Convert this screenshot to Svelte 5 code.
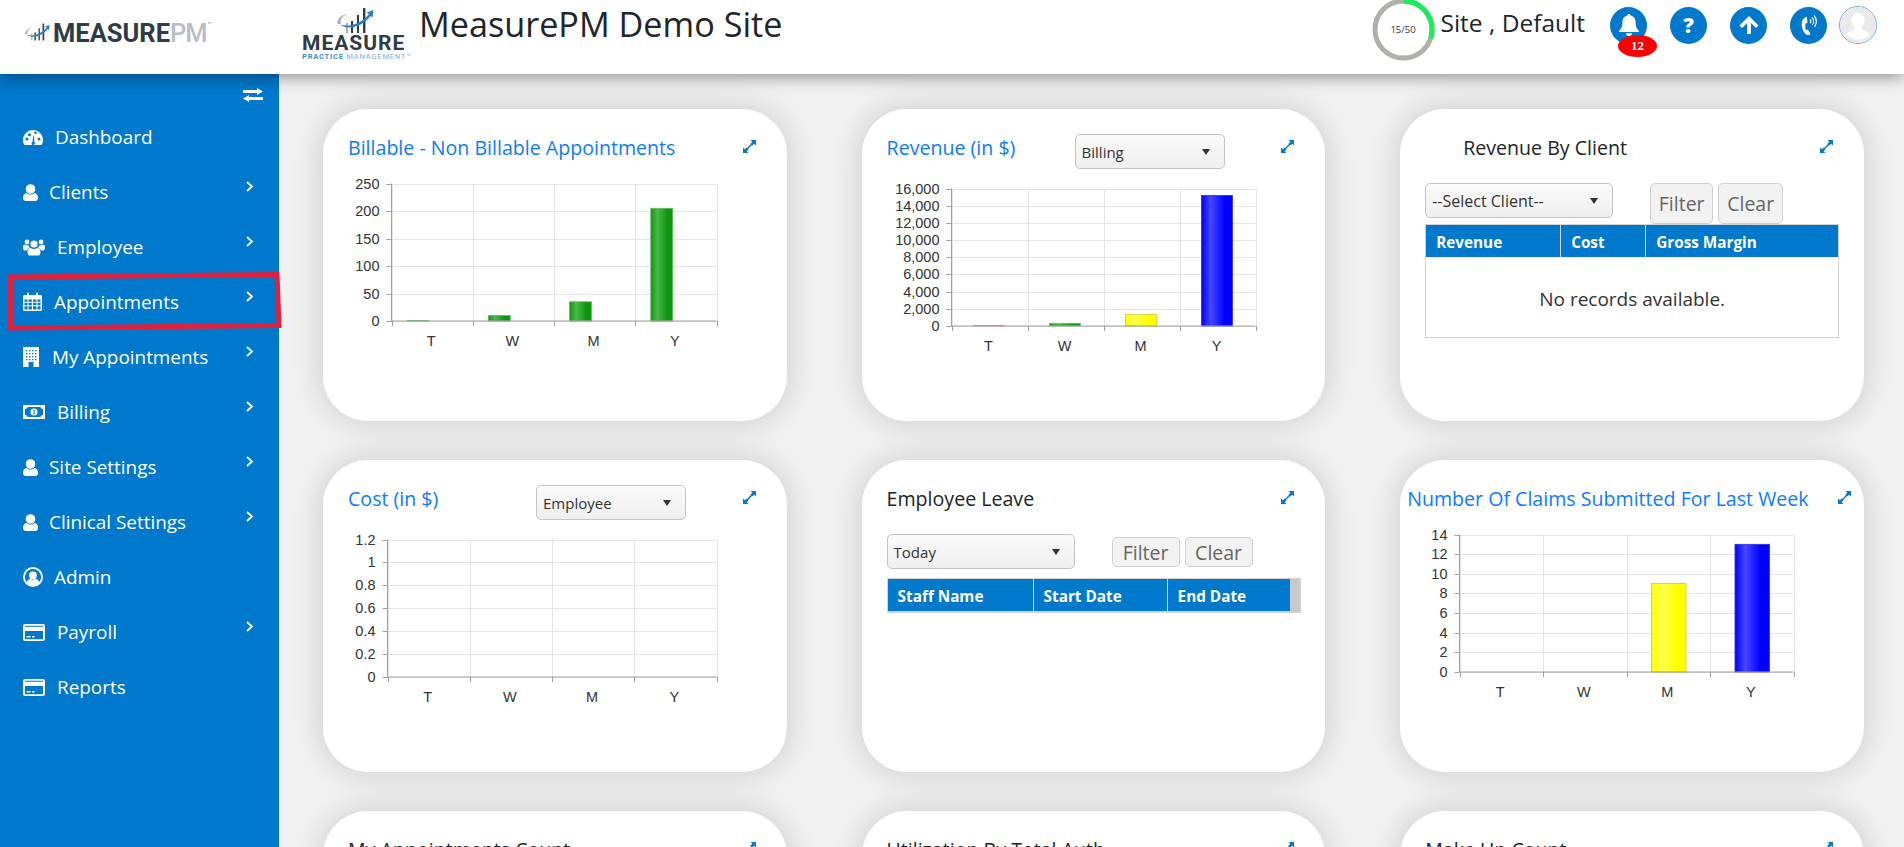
<script>
  const menu = [
    { label: "Dashboard", icon: "gauge", w: 21, sub: false },
    { label: "Clients", icon: "user", w: 15, sub: true },
    { label: "Employee", icon: "users", w: 23, sub: true },
    { label: "Appointments", icon: "calendar", w: 20, sub: true },
    { label: "My Appointments", icon: "building", w: 18, sub: true },
    { label: "Billing", icon: "money", w: 23, sub: true },
    { label: "Site Settings", icon: "user", w: 15, sub: true },
    { label: "Clinical Settings", icon: "user", w: 15, sub: true },
    { label: "Admin", icon: "usercircle", w: 20, sub: false },
    { label: "Payroll", icon: "card", w: 23, sub: true },
    { label: "Reports", icon: "card", w: 23, sub: false },
  ];

  const cats = ["T", "W", "M", "Y"];

  const billable = {
    id: "billable", x0: 68.5, x1: 393.5, y0: 74.5, y1: 212, max: 250,
    ticks: ["250", "200", "150", "100", "50", "0"],
    offset: 15.5, barW: 22,
    bars: [
      { i: 0, v: 1, c: "green" },
      { i: 1, v: 10, c: "green" },
      { i: 2, v: 35, c: "green" },
      { i: 3, v: 205, c: "green" },
    ],
  };
  const revenue = {
    id: "revenue", x0: 89.5, x1: 393.5, y0: 79.5, y1: 217, max: 16000,
    ticks: ["16,000", "14,000", "12,000", "10,000", "8,000", "6,000", "4,000", "2,000", "0"],
    offset: 22, barW: 31,
    bars: [
      { i: 0, v: 80, c: "red" },
      { i: 1, v: 310, c: "green" },
      { i: 2, v: 1320, c: "yellow" },
      { i: 3, v: 15200, c: "blue" },
    ],
  };
  const cost = {
    id: "cost", x0: 64.5, x1: 393.5, y0: 79.5, y1: 217, max: 1.2,
    ticks: ["1.2", "1", "0.8", "0.6", "0.4", "0.2", "0"],
    offset: 20, barW: 30,
    bars: [],
  };
  const claims = {
    id: "claims", x0: 59.5, x1: 393.5, y0: 74.5, y1: 212, max: 14,
    ticks: ["14", "12", "10", "8", "6", "4", "2", "0"],
    offset: 25, barW: 34.5,
    bars: [
      { i: 2, v: 9, c: "yellow" },
      { i: 3, v: 13, c: "blue" },
    ],
  };

  const swatch = {
    green: ["#0c960c", "#4db84d", "#6db86d"],
    red: ["#e08080", "#f0a0a0", "#e89090"],
    yellow: ["#ffff00", "#ffff4d", "#cfc92a"],
    blue: ["#0000ff", "#4646ff", "#3030d8"],
  };

  const tickY = (c, n) => c.y0 + (n * (c.y1 - c.y0)) / (c.ticks.length - 1);
  const gridX = (c, n) => c.x0 + (n * (c.x1 - c.x0)) / 4;
</script>

{#snippet expand()}
  <svg class="expand" width="13" height="13" viewBox="0 0 13 13" fill="#0a78c8">
    <path d="M7.500 0H13v5.500L11.200 3.700 9.300 5.600 7.400 3.700 9.300 1.800z" />
    <path d="M5.500 13H0V7.500l1.800 1.800 1.900-1.900 1.900 1.900-1.900 1.900z" />
    <path d="M3.500 8.500 8.500 3.500 9.500 4.500 4.500 9.500z" />
  </svg>
{/snippet}

{#snippet caret()}
  <svg width="8" height="6" viewBox="0 0 8 6"><path d="M0 0h8L4 6z" fill="#333" /></svg>
{/snippet}

{#snippet dropdown(label, cls)}
  <div class="dropdown {cls}">
    <span>{label}</span>
    {@render caret()}
  </div>
{/snippet}

{#snippet chart(c)}
  <svg class="chart" width="464" height="254" viewBox="0 58 464 254">
    <defs>
      {#each Object.entries(swatch) as [name, tone]}
        <linearGradient id="{c.id}-{name}" x1="0" x2="1" y1="0" y2="0">
          <stop offset="0" stop-color={tone[0]} />
          <stop offset="0.3" stop-color={tone[1]} />
          <stop offset="0.75" stop-color={tone[0]} />
          <stop offset="1" stop-color={tone[0]} />
        </linearGradient>
      {/each}
    </defs>
    {#each c.ticks as t, n}
      {@const y = Math.round(tickY(c, n)) + 0.5}
      <line x1={c.x0} x2={c.x1} y1={y} y2={y} class="grid" />
      <line x1={c.x0 - 5} x2={c.x0} y1={y} y2={y} class="axis" />
      <text x={c.x0 - 12} y={y + 4} text-anchor="end">{t}</text>
    {/each}
    {#each [0, 1, 2, 3, 4] as n}
      {@const x = Math.round(gridX(c, n)) + 0.5}
      <line x1={x} x2={x} y1={c.y0} y2={c.y1} class="grid" />
      <line x1={x} x2={x} y1={c.y1} y2={c.y1 + 5} class="axis" />
    {/each}
    {#each cats as cat, n}
      <text x={gridX(c, n + 0.5) - 1} y={c.y1 + 25} text-anchor="middle">{cat}</text>
    {/each}
    {#each c.bars as b}
      {@const h = (b.v / c.max) * (c.y1 - c.y0)}
      <rect
        x={gridX(c, b.i) + c.offset}
        y={c.y1 - h}
        width={c.barW}
        height={h}
        fill="url(#{c.id}-{b.c})"
        stroke={swatch[b.c][2]}
        stroke-width="0.8"
      />
    {/each}
    <line x1={c.x0} x2={c.x0} y1={c.y0} y2={c.y1} class="axis" />
    <line x1={c.x0} x2={c.x1} y1={c.y1} y2={c.y1} class="axis" />
  </svg>
{/snippet}

{#snippet markIcon(width, height)}
  <svg {width} {height} viewBox="0 0 37 25">
    <g fill="#2e3b48">
      <rect x="20" y="7" width="2" height="18" />
      <rect x="26" y="0" width="2.4" height="25" />
      <rect x="14" y="13" width="2" height="12" />
    </g>
    <g fill="#aeb4ba">
      <rect x="9" y="15" width="2" height="10" />
      <path d="M0 15C1 9 7 6 11 6 6 7.5 3 11 4 15.5 2 16.5 1 16 0 15z" />
    </g>
    <path d="M3 16.5C12 20 25 15 32 6l-2.500-1.500 7-2.500-1 7.500-2-1.600C26 18 11 23 3 16.500z" fill="#2a7fc4" />
  </svg>
{/snippet}

{#snippet menuIcon(name, w)}
  <svg width={w} height="20" viewBox="0 0 {w} 20" fill="#fff" class="menu-icon">
    {#if name === "gauge"}
      <path fill-rule="evenodd" d="M10 3C4.500 3 0 7.500 0 13c0 1.800.4 3.400 1.300 4.800.2.200.4.200.7.200h16c.3 0 .5 0 .7-.2.9-1.400 1.300-3 1.300-4.800 0-5.500-4.500-10-10-10zM4 13.500a1.500 1.500 0 1 1 0-3 1.500 1.500 0 0 1 0 3zm2.500-4.200a1.500 1.500 0 1 1 0-3 1.500 1.500 0 0 1 0 3zm5 7.200a1.500 1.500 0 0 1-3 0c0-.7.400-1.200 1-1.400l.9-6.600h.6l.4 6.700c.5.200 1 .7 1 1.300zm1-9.500a1.300 1.300 0 1 1 0-2.600 1.300 1.300 0 0 1 0 2.600zm3.500 6.500a1.500 1.500 0 1 1 0-3 1.500 1.500 0 0 1 0 3z" />
    {:else if name === "user"}
      <circle cx="7.500" cy="7" r="4.800" />
      <path d="M0 16c0-3 1.500-4.800 3.500-5 1 1 2.400 1.500 4 1.500s3-.5 4-1.500c2 .2 3.500 2 3.500 5 0 2-1.200 3-2.800 3H2.800C1.200 19 0 18 0 16z" />
    {:else if name === "users"}
      <circle cx="11" cy="7" r="3.600" />
      <circle cx="4" cy="5" r="2.400" />
      <circle cx="18" cy="5" r="2.400" />
      <path d="M4.500 15.500c0-3 1.300-4.700 3-4.700 1 .8 2.100 1.200 3.500 1.200s2.500-.4 3.500-1.200c1.700 0 3 1.700 3 4.700 0 2-1.200 3-2.500 3H7c-1.300 0-2.500-1-2.500-3z" />
      <path d="M0 10c0-1.500.7-2.500 1.800-2.500.6.500 1.400.8 2.200.8.500 0 .9 0 1.200-.2.400 1 1 1.800 1.800 2.400-1.500.6-2.600 1.700-3 3H1.500C.6 13.500 0 12 0 10zM22 10c0-1.500-.7-2.500-1.800-2.500-.6.500-1.400.8-2.200.8-.5 0-.9 0-1.200-.2-.4 1-1 1.800-1.800 2.400 1.500.6 2.600 1.700 3 3h2.500c.9 0 1.500-1.500 1.500-3.500z" />
    {:else if name === "calendar"}
      <path fill-rule="evenodd" d="M1.500 3H4V1.500a1 1 0 0 1 2 0V3h7V1.500a1 1 0 0 1 2 0V3h2.500c.8 0 1.500.7 1.500 1.500v13c0 .8-.7 1.500-1.500 1.500h-16C.7 19 0 18.300 0 17.500v-13C0 3.700.7 3 1.500 3zM1.500 7.500v2.300h3V7.500zm4 0v2.300h3.400V7.500zm4.600 0v2.300h3.400V7.500zm4.400 0v2.300h3V7.500zM1.500 10.800v2.400h3v-2.400zm4 0v2.400h3.400v-2.400zm4.600 0v2.400h3.400v-2.400zm4.400 0v2.400h3v-2.400zM1.500 14.200v3.300h3v-3.300zm4 0v3.300h3.400v-3.300zm4.600 0v3.300h3.400v-3.300zm4.400 0v3.300h3v-3.300z" />
    {:else if name === "building"}
      <path fill-rule="evenodd" d="M0 0h16v20H0zM3 3v1.200h1.500V3zm3 0v1.200h1.500V3zm3 0v1.200h1.500V3zm3 0v1.200h1.500V3zM3 6v1.200h1.500V6zm3 0v1.200h1.500V6zm3 0v1.200h1.500V6zm3 0v1.200h1.500V6zM3 9v1.200h1.500V9zm3 0v1.200h1.500V9zm3 0v1.200h1.500V9zm3 0v1.200h1.500V9zM3 12v1.200h1.500V12zm3 0v1.200h1.500V12zm3 0v1.200h1.500V12zm3 0v1.200h1.500V12zM5.500 15v5h5v-5z" />
    {:else if name === "money"}
      <path fill-rule="evenodd" d="M0 3h22v14H0zM2 7v6c1.500 0 2.500 1 2.500 2h13c0-1 1-2 2.500-2V7c-1.500 0-2.500-1-2.500-2h-13C4.500 6 3.500 7 2 7zm9-.500a3.500 3.500 0 1 1 0 7 3.500 3.500 0 0 1 0-7zM10 8v.8h.7v2.700H10v.8h2.200v-.8h-.6V8z" />
    {:else if name === "usercircle"}
      <path fill-rule="evenodd" d="M10 0a10 10 0 1 1 0 20 10 10 0 0 1 0-20zm0 2a8 8 0 0 0-6.300 12.900C4.500 13 6 12 7.300 12c1.700 1 3.700 1 5.400 0 1.300 0 2.800 1 3.600 2.900A8 8 0 0 0 10 2zm0 2.500a3.900 3.900 0 1 1 0 7.800 3.900 3.900 0 0 1 0-7.800z" />
    {:else if name === "card"}
      <path fill-rule="evenodd" d="M2 2h18c1.100 0 2 .9 2 2v13c0 1.100-.9 2-2 2H2c-1.100 0-2-.9-2-2V4c0-1.100.9-2 2-2zM2 9v8c0 .2.100.3.300.3h17.400c.2 0 .3-.1.300-.3V9zM2 3.800v1h18v-1zM3.500 14h4v1.500h-4zm5.500 0h2.500v1.500H9z" />
    {/if}
  </svg>
{/snippet}

<div class="page">
  <header class="topbar">
    <div class="brand">
      {@render markIcon(25, 22)}
      <span class="brand-name">MEASURE<em>PM</em><sup>™</sup></span>
    </div>
    <div class="client-logo">
      <div class="client-mark">{@render markIcon(37, 25)}</div>
      <div class="client-name">MEASURE</div>
      <div class="client-sub"><b>PRACTICE</b> MANAGEMENT™</div>
    </div>
    <h1 class="site-title">MeasurePM Demo Site</h1>

    <div class="top-right">
      <div class="ring">
        <svg width="63" height="63" viewBox="0 0 63 63" fill="none">
          <circle cx="31.500" cy="31.500" r="28.500" stroke="#aeb0a9" stroke-width="5" />
          <path d="M31.500 3A28.500 28.500 0 0 1 58.600 40.300" stroke="#17f055" stroke-width="5" />
        </svg>
        <span>15/50</span>
      </div>
      <div class="site-user">Site , Default</div>
      <div class="round-btn bell">
        <svg width="20" height="22" viewBox="0 0 20 22" fill="#fff">
          <path d="M10 0c1 0 1.700.7 1.700 1.600 3.200.8 4.900 3.300 4.900 6.400 0 4.500 1 6.500 3.400 9v1H0v-1c2.400-2.500 3.400-4.500 3.400-9 0-3.100 1.700-5.600 4.900-6.400C8.300.7 9 0 10 0z" />
          <path d="M7 19.200h6a3 3 0 0 1-6 0z" />
        </svg>
        <span class="badge">12</span>
      </div>
      <div class="round-btn help">?</div>
      <div class="round-btn">
        <svg width="20" height="20" viewBox="0 0 20 20" fill="#fff">
          <path d="M10 1 19.500 10.500 17 13l-5-5v11H8V8l-5 5-2.500-2.500z" />
        </svg>
      </div>
      <div class="round-btn">
        <svg width="20" height="24" viewBox="0 0 20 24" fill="none">
          <path d="M6 4.500C2.500 6.500 2 11.500 3.500 16S7.500 22.500 10 22l1.500-1-2.500-4.500-1.800.7C6.300 15.500 5.800 12 6.700 10.500l1.800-.8L7.800 3.800z" fill="#fff" />
          <path d="M11 6.500c1 1 1 2.500.2 3.600M13 4.500c2 2 2 5.300.4 7.500M15 2.500c3 3.100 3 8.100.6 11.400" stroke="#fff" stroke-width="1.200" />
        </svg>
      </div>
      <div class="avatar">
        <svg width="36" height="36" viewBox="0 0 36 36">
          <circle cx="18" cy="18" r="18" fill="#eaeaea" />
          <path d="M18 6c4 0 6.500 3 6.500 7 0 3-1.200 5.500-3 7v2.500c3 1.200 7.500 2.500 8.500 5A17 17 0 0 1 6 27.500c1-2.500 5.500-3.800 8.500-5V20c-1.800-1.500-3-4-3-7 0-4 2.500-7 6.500-7z" fill="#fff" />
        </svg>
      </div>
    </div>
  </header>

  <div class="body">
    <aside class="sidebar">
      <div class="toggle">
        <svg width="20" height="14" viewBox="0 0 20 14" fill="#fff">
          <path d="M0 2h14V0l6 3.500L14 7V5H0zM20 9H6V7l-6 3.500L6 14v-2h14z" />
        </svg>
      </div>
      <ul>
        {#each menu as item}
          <li>
            {@render menuIcon(item.icon, item.w)}
            <span class="menu-label">{item.label}</span>
            {#if item.sub}
              <svg class="chevron" width="8" height="11" viewBox="0 0 8 11" fill="none">
                <path d="M1 1l5 4.500-5 4.500" stroke="#fff" stroke-width="1.800" />
              </svg>
            {/if}
          </li>
        {/each}
      </ul>
    </aside>

    <main class="board">
      <section class="card">
        <div class="card-head">
          <h2 class="blue">Billable - Non Billable Appointments</h2>
          {@render expand()}
        </div>
        {@render chart(billable)}
      </section>

      <section class="card">
        <div class="card-head">
          <h2 class="blue">Revenue (in $)</h2>
          {@render dropdown("Billing", "head-select")}
          {@render expand()}
        </div>
        {@render chart(revenue)}
      </section>

      <section class="card">
        <div class="card-head indent">
          <h2>Revenue By Client</h2>
          {@render expand()}
        </div>
        <div class="filters">
          {@render dropdown("--Select Client--", "filter-select wide-text")}
          <button class="tall filter-first">Filter</button>
          <button class="tall">Clear</button>
        </div>
        <div class="grid-table">
          <div class="grid-row">
            <div class="col c135">Revenue</div>
            <div class="col c85">Cost</div>
            <div class="col grow">Gross Margin</div>
          </div>
          <div class="no-records">No records available.</div>
        </div>
      </section>

      <section class="card">
        <div class="card-head">
          <h2 class="blue">Cost (in $)</h2>
          {@render dropdown("Employee", "head-select")}
          {@render expand()}
        </div>
        {@render chart(cost)}
      </section>

      <section class="card">
        <div class="card-head">
          <h2>Employee Leave</h2>
          {@render expand()}
        </div>
        <div class="filters">
          {@render dropdown("Today", "filter-select")}
          <button class="short filter-first">Filter</button>
          <button class="short">Clear</button>
        </div>
        <div class="grid-table leave">
          <div class="grid-row">
            <div class="col c146">Staff Name</div>
            <div class="col c134">Start Date</div>
            <div class="col grow">End Date</div>
            <div class="gutter"></div>
          </div>
        </div>
      </section>

      <section class="card">
        <div class="card-head tight">
          <h2 class="blue">Number Of Claims Submitted For Last Week</h2>
          {@render expand()}
        </div>
        {@render chart(claims)}
      </section>

      <section class="card">
        <div class="card-head"><h2>My Appointments Count</h2>{@render expand()}</div>
      </section>
      <section class="card">
        <div class="card-head"><h2>Utilization By Total Auth</h2>{@render expand()}</div>
      </section>
      <section class="card">
        <div class="card-head"><h2>Make Up Count</h2>{@render expand()}</div>
      </section>
    </main>
  </div>

  <svg class="highlight" width="290" height="70" viewBox="0 265 290 70" fill="none">
    <path d="M10.500 277 277 274.500 279 325.500 10.500 328z" stroke="#e0203c" stroke-width="5" />
  </svg>
</div>

<style>
  :global(body) {
    margin: 0;
    font-family: "Open Sans", "Noto Sans", sans-serif;
    color: #212529;
  }
  .page {
    position: relative;
    height: 100vh;
    overflow: hidden;
    background: #f1f1f1;
    display: flex;
    flex-direction: column;
  }
  .topbar {
    position: relative;
    z-index: 2;
    flex: none;
    height: 74px;
    display: flex;
    background: #fff;
    box-shadow: 0 2px 16px rgba(0, 0, 0, 0.45);
  }
  .brand {
    width: 279px;
    flex: none;
    box-sizing: border-box;
    padding: 21px 0 0 25px;
    display: flex;
    align-items: flex-start;
    gap: 3px;
  }
  .brand-name {
    font-family: Roboto, sans-serif;
    font-weight: 700;
    font-size: 25.500px;
    line-height: 24px;
    color: #2e3b48;
    white-space: nowrap;
  }
  .brand-name em {
    font-style: normal;
    font-weight: 500;
    letter-spacing: -1px;
    color: #b8bec4;
  }
  .brand-name sup {
    font-size: 6px;
    line-height: 0;
    vertical-align: 16px;
    margin-left: 1px;
    color: #8c949c;
  }
  .client-logo {
    width: 117px;
    flex: none;
    margin-left: 23px;
    padding-top: 8px;
    font-family: Roboto, sans-serif;
    white-space: nowrap;
  }
  .client-mark {
    height: 26px;
    padding-left: 35px;
    line-height: 0;
  }
  .client-name {
    font-weight: 700;
    font-size: 21px;
    line-height: 18px;
    letter-spacing: 1px;
    color: #2e3b48;
  }
  .client-sub {
    font-size: 7.500px;
    line-height: 9px;
    letter-spacing: 0.8px;
    color: #7fb0dc;
  }
  .client-sub b {
    color: #3f8ccc;
  }
  .site-title {
    margin: 1px 0 0;
    font-size: 34.200px;
    font-weight: 400;
    line-height: 46px;
    white-space: nowrap;
  }
  .top-right {
    margin-left: auto;
    padding-right: 27px;
    display: flex;
    align-items: flex-start;
  }
  .ring {
    position: relative;
    width: 63px;
    height: 63px;
    margin-top: -2px;
    margin-right: 6px;
    line-height: 0;
  }
  .ring span {
    position: absolute;
    inset: 0;
    display: flex;
    align-items: center;
    justify-content: center;
    font-size: 9.500px;
    line-height: 1;
    color: #333;
  }
  .site-user {
    width: 169.500px;
    font-size: 24.500px;
    line-height: 46px;
    white-space: nowrap;
  }
  .round-btn {
    position: relative;
    width: 37px;
    height: 37px;
    margin: 6.500px 23px 0 0;
    border-radius: 50%;
    background: #0078cc;
    display: flex;
    align-items: center;
    justify-content: center;
    color: #fff;
  }
  .round-btn:nth-last-child(2) {
    margin-right: 12px;
  }
  .help {
    font-weight: 800;
    font-size: 21px;
  }
  .badge {
    position: absolute;
    left: 8px;
    top: 28.500px;
    width: 39px;
    height: 22px;
    border-radius: 50%;
    background: #f00;
    color: #fff;
    font-family: "Liberation Serif", serif;
    font-weight: 700;
    font-size: 13px;
    line-height: 22px;
    text-align: center;
  }
  .avatar {
    width: 36px;
    height: 36px;
    margin-top: 6px;
    border: 1px solid #66aee6;
    border-radius: 50%;
    line-height: 0;
  }
  .body {
    flex: 1;
    min-height: 0;
    display: flex;
  }
  .sidebar {
    width: 279px;
    flex: none;
    background: #0078cc;
    color: #fff;
  }
  .toggle {
    height: 35px;
    box-sizing: border-box;
    padding: 14px 16px 0 0;
    text-align: right;
    line-height: 0;
  }
  .sidebar ul {
    margin: 0;
    padding: 0;
    list-style: none;
  }
  .sidebar li {
    height: 55px;
    padding: 0 25px 0 23px;
    display: flex;
    align-items: center;
    font-size: 18.900px;
  }
  .menu-icon {
    flex: none;
    margin-right: 11px;
  }
  .chevron {
    margin-left: auto;
    margin-bottom: 11px;
  }
  .board {
    flex: 1;
    min-width: 0;
    box-sizing: border-box;
    padding: 35px 0 0 44px;
    display: grid;
    grid-template-columns: repeat(3, 463.700px);
    grid-auto-rows: 312px;
    column-gap: 74.900px;
    row-gap: 39px;
  }
  .card {
    background: #fff;
    border-radius: 45px;
    box-shadow: 0 0 32px rgba(0, 0, 0, 0.17);
  }
  .card-head {
    height: 58px;
    box-sizing: border-box;
    padding: 22px 31px 0 25px;
    display: flex;
    align-items: flex-start;
  }
  .card-head.indent {
    padding-left: 63px;
  }
  .card-head.tight {
    padding: 22px 13px 0 7px;
  }
  h2 {
    margin: 0;
    font-size: 19.600px;
    font-weight: 500;
    line-height: 33px;
    white-space: nowrap;
  }
  h2.blue {
    color: #0d7bff;
  }
  .expand {
    flex: none;
    margin: 9px 0 0 auto;
  }
  .dropdown {
    box-sizing: border-box;
    height: 35px;
    padding: 0 14px 0 6px;
    display: flex;
    align-items: center;
    justify-content: space-between;
    border: 1px solid #c4c4c4;
    border-radius: 5px;
    background: linear-gradient(#fafafa, #efefef);
    font-size: 15px;
    color: #333;
    white-space: nowrap;
  }
  .wide-text {
    font-size: 16px;
  }
  .head-select {
    position: absolute;
    width: 150px;
    margin: 3px 0 0 188px;
  }
  .filter-select {
    width: 188px;
  }
  .filters {
    margin: 16px 0 0 25px;
    display: flex;
    align-items: flex-start;
    gap: 5px;
  }
  button {
    box-sizing: border-box;
    padding: 0;
    border: 1px solid #cfcfcf;
    border-radius: 5px;
    background: #f2f2f2;
    font-family: inherit;
    font-size: 19.500px;
    color: #666;
  }
  .filter-first {
    margin-left: 32px;
  }
  .tall {
    height: 41px;
    width: 63px;
  }
  .short {
    height: 30px;
    width: 68px;
    margin-top: 3px;
  }
  .tall + .tall {
    width: 65px;
  }
  .grid-table {
    width: 414px;
    margin-left: 25px;
    box-sizing: border-box;
    border: 1px solid #d2d2d2;
  }
  .grid-table.leave {
    margin-top: 9px;
    border-width: 1px 1px 2px;
  }
  .grid-row {
    height: 32px;
    display: flex;
    background: #0079cd;
  }
  .col {
    box-sizing: border-box;
    padding-left: 10px;
    border-right: 1px solid #cfd8de;
    color: #fff;
    font-weight: 700;
    font-size: 15.300px;
    line-height: 34px;
    white-space: nowrap;
  }
  .grow {
    flex: 1;
    border-right: 0;
  }
  .c135 { width: 135px; }
  .c85 { width: 85px; }
  .c146 { width: 146px; }
  .c134 { width: 134px; }
  .gutter {
    width: 10px;
    background: #c9c9c9;
  }
  .no-records {
    height: 80px;
    text-align: center;
    font-size: 19px;
    line-height: 84px;
    color: #333;
  }
  .chart {
    display: block;
  }
  .chart text {
    font-family: "Liberation Sans", Arial, sans-serif;
    font-size: 14.500px;
    fill: #333;
  }
  .chart .grid {
    stroke: #e4e4e4;
    stroke-width: 1;
  }
  .chart .axis {
    stroke: #a0a0a0;
    stroke-width: 1;
  }
  .highlight {
    position: absolute;
    left: 0;
    top: 265px;
    z-index: 3;
  }
</style>
